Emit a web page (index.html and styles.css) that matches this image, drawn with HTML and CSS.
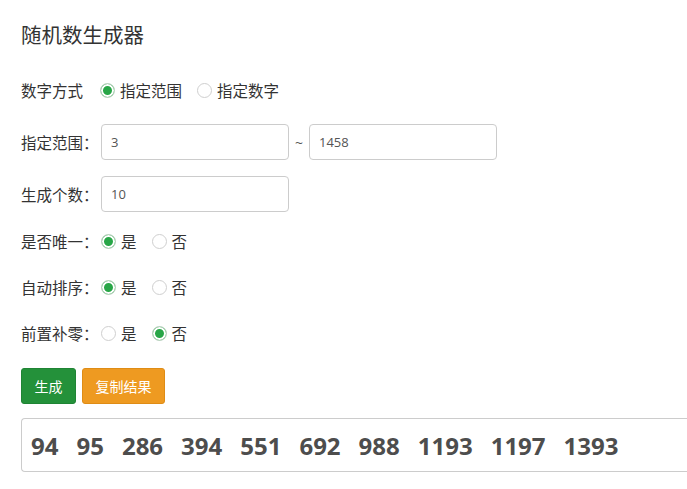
FILE: index.html
```html
<!DOCTYPE html>
<html lang="zh-CN">
<head>
<meta charset="utf-8">
<title>随机数生成器</title>
<link rel="stylesheet" href="styles.css">
</head>
<body>
<div class="page">
  <h1 class="title">随机数生成器</h1>

  <div class="row row-mode">
    <span class="lbl lbl-plain">数字方式</span>
    <label class="opt"><input type="radio" name="mode" checked><span>指定范围</span></label>
    <label class="opt"><input type="radio" name="mode"><span>指定数字</span></label>
  </div>

  <div class="row row-field">
    <span class="lbl">指定范围：</span>
    <input class="field" type="text" value="3">
    <span class="tilde">~</span>
    <input class="field" type="text" value="1458">
  </div>

  <div class="row row-field">
    <span class="lbl">生成个数：</span>
    <input class="field" type="text" value="10">
  </div>

  <div class="row row-choice">
    <span class="lbl">是否唯一：</span>
    <label class="opt"><input type="radio" name="unique" checked><span>是</span></label>
    <label class="opt"><input type="radio" name="unique"><span>否</span></label>
  </div>

  <div class="row row-choice">
    <span class="lbl">自动排序：</span>
    <label class="opt"><input type="radio" name="sort" checked><span>是</span></label>
    <label class="opt"><input type="radio" name="sort"><span>否</span></label>
  </div>

  <div class="row row-choice row-last">
    <span class="lbl">前置补零：</span>
    <label class="opt"><input type="radio" name="pad"><span>是</span></label>
    <label class="opt"><input type="radio" name="pad" checked><span>否</span></label>
  </div>

  <div class="actions">
    <button class="btn btn-green" type="button">生成</button>
    <button class="btn btn-orange" type="button">复制结果</button>
  </div>

  <div class="result">
    <span class="num">94</span><span class="num">95</span><span class="num">286</span><span class="num">394</span><span class="num">551</span><span class="num">692</span><span class="num">988</span><span class="num">1193</span><span class="num">1197</span><span class="num">1393</span>
  </div>
</div>
</body>
</html>
```

FILE: styles.css
```css
html, body {
  margin: 0;
  padding: 0;
  background: #fff;
  overflow: hidden;
}

body {
  font-family: "Open Sans", "Noto Sans CJK SC", sans-serif;
  font-size: 15.5px;
  color: #333;
}

.page {
  padding: 20px 0 0 21px;
  width: 720px;
}

.title {
  margin: 0 0 22px;
  font-size: 20.5px;
  font-weight: normal;
  line-height: 30px;
  color: #333;
}

.row {
  display: flex;
  align-items: center;
  height: 36px;
}

.row-mode { margin-bottom: 16px; }
.row-field { margin-bottom: 16px; }
.row-field + .row-choice { margin-top: -5px; }
.row-choice { margin-bottom: 10px; }
.row-last { margin-bottom: 17px; }

.lbl {
  width: 80px;
  flex: none;
  white-space: nowrap;
}

.lbl-plain {
  width: 79px;
}

.opt {
  display: flex;
  align-items: center;
  margin-right: 15px;
  cursor: pointer;
}

.opt input {
  appearance: none;
  -webkit-appearance: none;
  width: 15px;
  height: 15px;
  margin: 0 5px 0 0;
  border: 1px solid #cfcfcf;
  border-radius: 50%;
  background: #fff;
  box-sizing: border-box;
}

/* checked: thin white ring around a solid green dot */
.opt input:checked {
  background: #28a647;
  box-shadow: inset 0 0 0 2px #fff;
  border-color: #c6d6c9;
}

.field {
  width: 188px;
  height: 36px;
  box-sizing: border-box;
  border: 1px solid #ccc;
  border-radius: 4px;
  padding: 0 9px;
  font-family: "Open Sans", "Noto Sans CJK SC", sans-serif;
  font-size: 13px;
  color: #555;
  background: #fff;
}

.tilde {
  width: 20px;
  text-align: center;
  color: #555;
  font-size: 14px;
}

.actions {
  display: flex;
  gap: 6px;
  margin-bottom: 14px;
}

.btn {
  height: 36px;
  padding: 0 12.5px;
  border-radius: 3px;
  font-family: "Open Sans", "Noto Sans CJK SC", sans-serif;
  font-size: 14px;
  color: #fff;
  cursor: pointer;
}

.btn-green {
  background: #24913a;
  border: 1px solid #1f8434;
}

.btn-orange {
  background: #ee9a21;
  border: 1px solid #df8c15;
}

.result {
  display: flex;
  align-items: center;
  height: 54px;
  width: 700px;
  box-sizing: border-box;
  border: 1px solid #ccc;
  border-right: none;
  border-radius: 4px 0 0 4px;
  padding-left: 9px;
  font-size: 24px;
  font-weight: bold;
  color: #4d4d4d;
}

.num {
  margin-right: 18px;
}
```
